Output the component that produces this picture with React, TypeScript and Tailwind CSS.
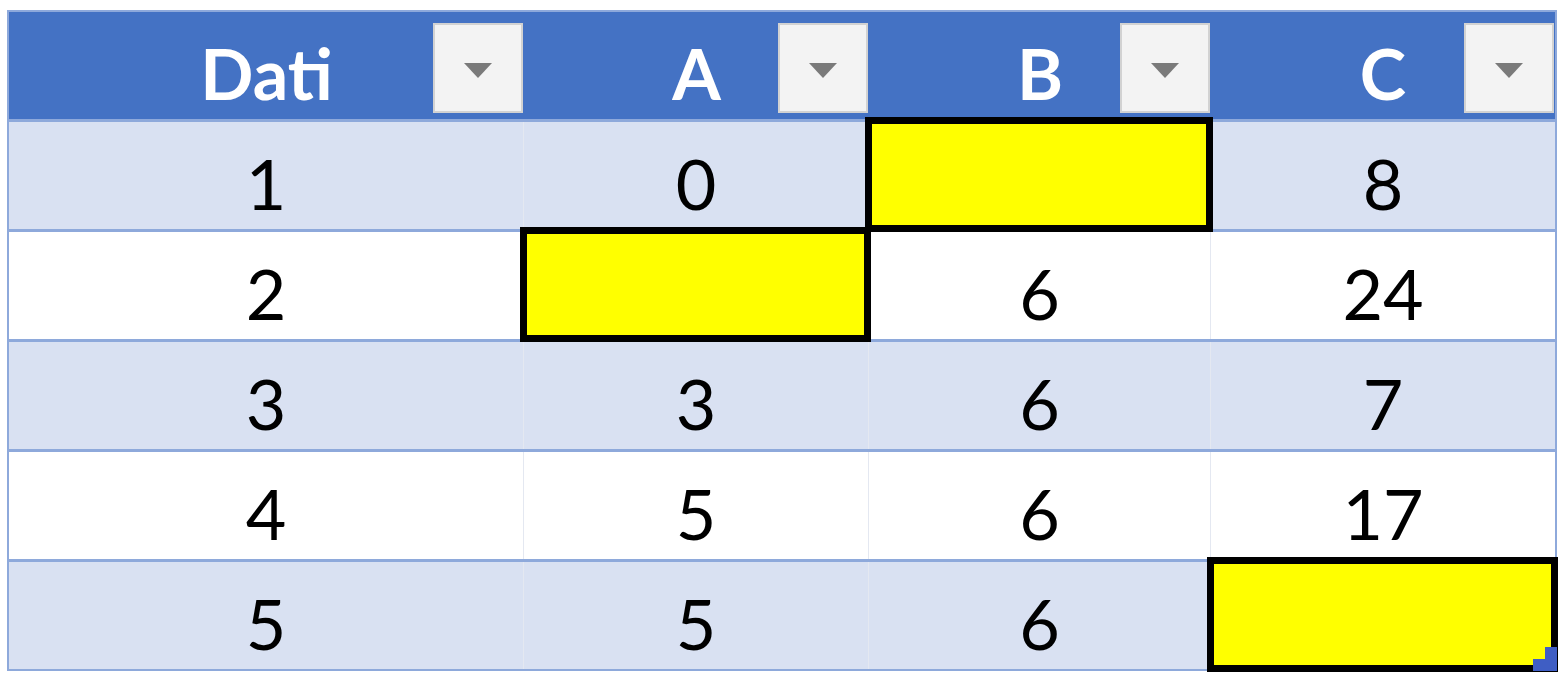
import React from 'react';

type Cell = string | null;

const headers = ['Dati', 'A', 'B', 'C'];

// null = empty highlighted (yellow) cell
const rows: Cell[][] = [
  ['1', '0', null, '8'],
  ['2', null, '6', '24'],
  ['3', '3', '6', '7'],
  ['4', '5', '6', '17'],
  ['5', '5', '6', null],
];

const gridCols = 'grid grid-cols-[515px_345px_342px_344px]';

const FilterButton = () => (
  <div className="absolute right-[1px] top-[11px] flex h-[90px] w-[90px] items-center justify-center border-2 border-[#d2d2d2] bg-[#f3f3f3] pt-[5px]">
    <svg width="28" height="15" viewBox="0 0 28 15">
      <polygon points="0,0 28,0 14,15" fill="#7a7a7a" />
    </svg>
  </div>
);

const YellowCell = ({ selected }: { selected?: boolean }) => (
  <div className="absolute -top-[5px] -bottom-[3px] -left-[4px] -right-[3px] z-10 border-[7px] border-black bg-[#ffff00]">
    {selected && (
      <svg
        className="absolute -right-[6px] -bottom-[6px]"
        width="24"
        height="24"
        viewBox="0 0 24 24"
      >
        <polygon points="12,0 24,0 24,24 0,24 0,12 12,12" fill="#3f5ec4" />
      </svg>
    )}
  </div>
);

export default function App() {
  return (
    <div className="min-h-[688px] w-[1558px] bg-white pl-[7px] pt-[10px] font-['Lato',sans-serif]">
      <div className="w-fit border-2 border-[#8ea9db]">
        {/* Header */}
        <div className={`${gridCols} h-[107px] bg-[#4472c4]`}>
          {headers.map((h) => (
            <div
              key={h}
              className="relative flex items-center justify-center pt-[14px] text-[70px] font-bold leading-none text-white"
            >
              {h}
              <FilterButton />
            </div>
          ))}
        </div>

        {/* Body */}
        {rows.map((row, r) => (
          <div
            key={r}
            className={`${gridCols} h-[110px] border-t-[3px] border-[#8ea9db] ${
              r % 2 === 0 ? 'bg-[#d9e1f2]' : 'bg-white'
            }`}
          >
            {row.map((value, c) => (
              <div
                key={c}
                className={`relative flex items-center justify-center pt-[14px] text-[70px] leading-none text-black ${
                  c < 3 ? 'border-r border-[#e4e8f1]' : ''
                }`}
              >
                {value === null ? (
                  <YellowCell selected={r === 4 && c === 3} />
                ) : (
                  value
                )}
              </div>
            ))}
          </div>
        ))}
      </div>
    </div>
  );
}
